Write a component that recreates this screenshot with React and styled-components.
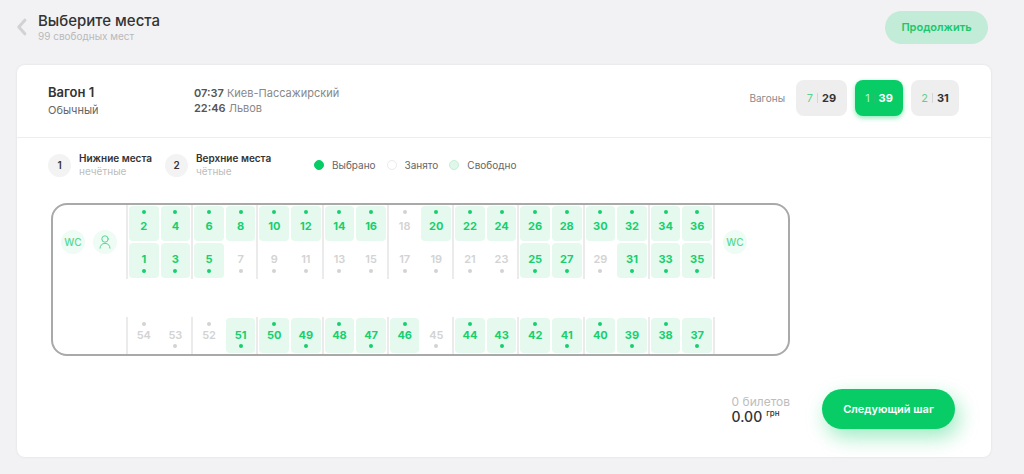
import React, { useState } from 'react'
import styled, { createGlobalStyle } from 'styled-components'


const GlobalStyle = createGlobalStyle`
  * {
    box-sizing: border-box;
  }

  body {
    margin: 0;
    background: #f2f2f4;
    color: #333;
    font-family: Inter, "Liberation Sans", sans-serif;
  }

  button {
    font-family: inherit;
    border: none;
    padding: 0;
    cursor: pointer;
  }

  h1, h2, p {
    margin: 0;
  }
`;

const Page = styled.main`
  padding: 10px 33px 16px 17px;
`;

const TopBar = styled.header`
  display: flex;
  align-items: center;
  justify-content: space-between;
  height: 34px;
  padding-right: 3px;
  margin-bottom: 21px;
`;

const TitleGroup = styled.div`
  display: flex;
  align-items: center;
  gap: 11px;
`;

const BackButton = styled.button`
  display: flex;
  background: none;
`;

const Title = styled.h1`
  font-size: 15px;
  line-height: 19px;
  font-weight: 500;
`;

const Subtitle = styled.p`
  font-size: 10px;
  line-height: 13px;
  color: #b9b9bb;
`;

const ContinueButton = styled.button`
  height: 33px;
  width: 103px;
  border-radius: 17px;
  background: #c2ebd8;
  color: #1ac76a;
  font-size: 11px;
  font-weight: 600;
`;

const Card = styled.section`
  background: #fff;
  border-radius: 8px;
  box-shadow: 0 0 3px rgba(0, 0, 0, 0.08);
`;

const CardHeader = styled.div`
  display: flex;
  align-items: center;
  height: 73px;
  padding: 0 32px 0 31px;
  border-bottom: 1px solid #ededed;
`;

const WagonInfo = styled.div`
  width: 146px;
`;

const WagonName = styled.h2`
  font-size: 13px;
  line-height: 18px;
  font-weight: 600;
`;

const WagonType = styled.p`
  font-size: 11px;
  line-height: 18px;
  color: #666;
`;

const Route = styled.div`
  flex: 1;
  font-size: 11px;
  line-height: 15px;
  color: #888;
`;

const Time = styled.time`
  font-weight: 600;
  color: #555;
`;

const WagonList = styled.nav`
  display: flex;
  align-items: center;
  gap: 8px;
  margin-bottom: 6px;
`;

const WagonLabel = styled.span`
  font-size: 10px;
  color: #8a8a8a;
  margin-right: 3px;
`;

const WagonButton = styled.button`
  display: flex;
  align-items: center;
  justify-content: center;
  gap: 4px;
  width: ${({ $wide }) => ($wide ? '51px' : '48px')};
  height: 36px;
  border-radius: 8px;
  font-size: 11px;
  background: ${({ $active }) => ($active ? '#08cd67' : '#eee')};
  color: ${({ $active }) => ($active ? '#b5f5d2' : '#5fce8e')};
  box-shadow: ${({ $active }) => ($active ? '0 2px 5px rgba(8, 205, 103, 0.45)' : 'none')};

  b {
    font-weight: 700;
    color: ${({ $active }) => ($active ? '#fff' : '#333')};
  }
`;

const WagonDivider = styled.span`
  width: 1px;
  height: 10px;
  background: ${({ $active }) => ($active ? '#2bbd6f' : '#d6d6d6')};
`;

const Legend = styled.div`
  display: flex;
  align-items: center;
  padding: 15px 31px 0;
  height: 39px;
`;

const Place = styled.div`
  display: flex;
  align-items: center;
  gap: 8px;
  width: ${({ $width }) => $width};
`;

const PlaceNumber = styled.span`
  display: flex;
  align-items: center;
  justify-content: center;
  width: 23px;
  height: 23px;
  border-radius: 50%;
  background: #f3f3f3;
  font-size: 10px;
  font-weight: 600;
`;

const PlaceName = styled.p`
  font-size: 10px;
  line-height: 13px;
  font-weight: 600;
`;

const PlaceHint = styled.p`
  font-size: 10px;
  line-height: 13px;
  color: #bdbdbd;
`;

const Status = styled.div`
  display: flex;
  align-items: center;
  gap: 8px;
  margin-right: 11px;
  font-size: 10px;
  color: #666;
`;

const statusColors = {
  selected: ['#08cd67', '#08cd67'],
  taken: ['#fff', '#ebebeb'],
  free: ['#dff8ea', '#c5efd8'],
}

const StatusDot = styled.span`
  width: 10px;
  height: 10px;
  border-radius: 50%;
  background: ${({ $type }) => statusColors[$type][0]};
  border: 1px solid ${({ $type }) => statusColors[$type][1]};
`;

const Train = styled.div`
  display: flex;
  max-width: 739px;
  margin: 26px 34px 0;
  border: 2px solid #a9a9a9;
  border-radius: 16px;
`;

const Service = styled.div`
  display: flex;
  align-items: center;
  gap: 8px;
  flex: 0 0 73px;
  height: 74px;
  padding-left: 8px;
`;

const ServiceIcon = styled.span`
  display: flex;
  align-items: center;
  justify-content: center;
  width: 24px;
  height: 24px;
  border-radius: 50%;
  background: #effbf5;
  color: #55d992;
  font-size: 10px;
  font-weight: 500;
`;

const Seats = styled.div`
  flex: 1;
  display: flex;
  flex-direction: column;
  gap: 38px;
`;

const SeatRow = styled.div`
  display: grid;
  grid-template-columns: repeat(9, 1fr);
  border-right: 2px solid #ebebeb;
`;

const Compartment = styled.div`
  display: grid;
  grid-template-columns: 1fr 1fr;
  gap: 2px;
  padding: 1px;
  border-left: 2px solid #ebebeb;
`;

// side berths keep the number in the middle, whichever end the dot is on
const seatPadding = {
  upper: '4px',
  lower: '8px',
  sideUpper: '4px',
  sideLower: '9px',
}

const seatGap = {
  upper: '4px',
  lower: '2px',
  sideUpper: '1px',
  sideLower: '1px',
}

const SeatButton = styled.button`
  display: flex;
  flex-direction: column;
  align-items: center;
  height: 35px;
  padding-top: ${({ $kind }) => seatPadding[$kind]};
  gap: ${({ $kind }) => seatGap[$kind]};
  border-radius: 4px;
  background: #e5f9ee;
  color: #17cf6f;
  font-size: 11px;
  line-height: 16px;
  font-weight: 700;

  &:disabled {
    background: none;
    color: #d3d3d3;
    font-weight: 600;
    cursor: default;
  }
`;

const SeatDot = styled.span`
  width: 4px;
  height: 4px;
  border-radius: 50%;
  background: currentColor;
`;

const CardFooter = styled.div`
  display: flex;
  align-items: center;
  justify-content: flex-end;
  gap: 32px;
  padding: 33px 36px 28px;
`;

const Total = styled.div`
  padding-top: 2px;
`;

const TicketCount = styled.p`
  font-size: 12px;
  line-height: 14px;
  color: #bdbdbd;
`;

const Price = styled.p`
  display: flex;
  gap: 4px;
  font-size: 14px;
  line-height: 16px;
  font-weight: 500;
`;

const Currency = styled.span`
  font-size: 8px;
  line-height: 9px;
`;

const NextButton = styled.button`
  width: 133px;
  height: 40px;
  border-radius: 20px;
  background: #08cd67;
  color: #fff;
  font-size: 11px;
  font-weight: 600;
  box-shadow: 4px 8px 20px rgba(8, 205, 103, 0.4);
`;

const wagons = [
  { number: 7, free: 29 },
  { number: 1, free: 39 },
  { number: 2, free: 31 },
]

const taken = [7, 9, 11, 13, 15, 17, 18, 19, 21, 23, 29, 45, 52, 53, 54]

const compartments = [0, 1, 2, 3, 4, 5, 6, 7, 8]

const Seat = ({ number, side }) => {
  const top = number % 2 === 0
  const kind = side ? (top ? 'sideUpper' : 'sideLower') : (top ? 'upper' : 'lower')

  return (
    <SeatButton $kind={kind} disabled={taken.includes(number)}>
      {top && <SeatDot />}
      <span>{number}</span>
      {!top && <SeatDot />}
    </SeatButton>
  )
}

const App = () => {

  const [wagon, setWagon] = useState(1)

  return (
    <>
      <GlobalStyle />
      <Page>
        <TopBar>
          <TitleGroup>
            <BackButton aria-label="Назад">
              <svg width="10" height="18" viewBox="0 0 10 18" fill="none" stroke="#d2d2d3" strokeWidth="3" strokeLinecap="round" strokeLinejoin="round">
                <path d="M7.8 2.2 L1.8 9 L7.8 15.8" />
              </svg>
            </BackButton>
            <div>
              <Title>Выберите места</Title>
              <Subtitle>99 свободных мест</Subtitle>
            </div>
          </TitleGroup>
          <ContinueButton>Продолжить</ContinueButton>
        </TopBar>

        <Card>
          <CardHeader>
            <WagonInfo>
              <WagonName>Вагон 1</WagonName>
              <WagonType>Обычный</WagonType>
            </WagonInfo>
            <Route>
              <p><Time>07:37</Time> Киев-Пассажирский</p>
              <p><Time>22:46</Time> Львов</p>
            </Route>
            <WagonList>
              <WagonLabel>Вагоны</WagonLabel>
              {wagons.map(({ number, free }, i) => (
                <WagonButton key={number} $wide={i === 0} $active={wagon === number} onClick={() => setWagon(number)}>
                  <span>{number}</span>
                  <WagonDivider $active={wagon === number} />
                  <b>{free}</b>
                </WagonButton>
              ))}
            </WagonList>
          </CardHeader>

          <Legend>
            <Place $width="117px">
              <PlaceNumber>1</PlaceNumber>
              <div>
                <PlaceName>Нижние места</PlaceName>
                <PlaceHint>нечётные</PlaceHint>
              </div>
            </Place>
            <Place $width="149px">
              <PlaceNumber>2</PlaceNumber>
              <div>
                <PlaceName>Верхние места</PlaceName>
                <PlaceHint>чётные</PlaceHint>
              </div>
            </Place>
            <Status><StatusDot $type="selected" />Выбрано</Status>
            <Status><StatusDot $type="taken" />Занято</Status>
            <Status><StatusDot $type="free" />Свободно</Status>
          </Legend>

          <Train>
            <Service>
              <ServiceIcon>WC</ServiceIcon>
              <ServiceIcon>
                <svg width="12" height="14" viewBox="0 0 12 14" fill="none" stroke="currentColor" strokeWidth="1" strokeLinecap="round">
                  <circle cx="6" cy="4" r="3.2" />
                  <path d="M1 13.2 C1.2 10.2 3 8.4 6 8.4 C9 8.4 10.8 10.2 11 13.2" />
                </svg>
              </ServiceIcon>
            </Service>
            <Seats>
              <SeatRow>
                {compartments.map(c => (
                  <Compartment key={c}>
                    <Seat number={c * 4 + 2} />
                    <Seat number={c * 4 + 4} />
                    <Seat number={c * 4 + 1} />
                    <Seat number={c * 4 + 3} />
                  </Compartment>
                ))}
              </SeatRow>
              <SeatRow>
                {compartments.map(c => (
                  <Compartment key={c}>
                    <Seat number={54 - c * 2} side />
                    <Seat number={53 - c * 2} side />
                  </Compartment>
                ))}
              </SeatRow>
            </Seats>
            <Service>
              <ServiceIcon>WC</ServiceIcon>
            </Service>
          </Train>

          <CardFooter>
            <Total>
              <TicketCount>0 билетов</TicketCount>
              <Price>0.00 <Currency>грн</Currency></Price>
            </Total>
            <NextButton>Следующий шаг</NextButton>
          </CardFooter>
        </Card>
      </Page>
    </>
  )
}

export default App
